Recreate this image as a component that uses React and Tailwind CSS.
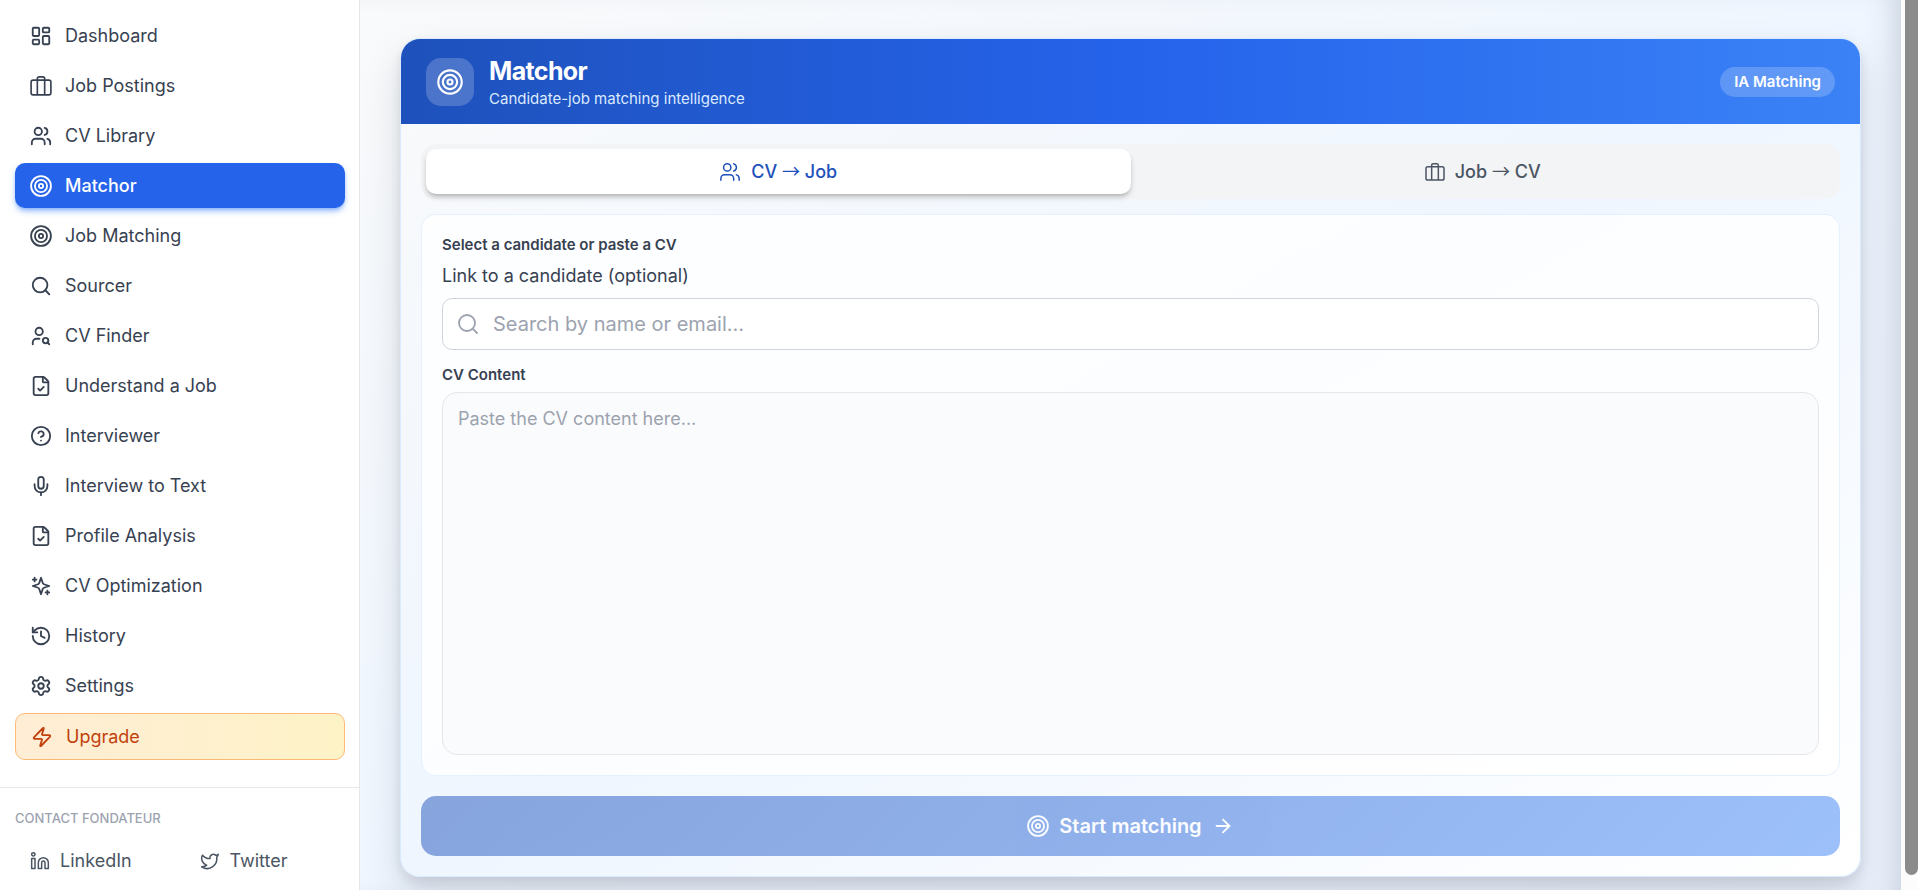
import {
  ArrowRight,
  CircleHelp,
  FileCheck,
  History,
  LayoutDashboard,
  Linkedin,
  Mic,
  Search,
  Settings,
  Twitter,
  UserSearch,
  Users,
  Zap,
} from "lucide-react";

// Bullseye with a small open centre
function Bullseye({ className }) {
  return (
    <svg
      viewBox="0 0 24 24"
      fill="none"
      stroke="currentColor"
      strokeWidth="2"
      className={className}
      aria-hidden="true"
    >
      <circle cx="12" cy="12" r="10.8" />
      <circle cx="12" cy="12" r="6.6" />
      <circle cx="12" cy="12" r="2.3" />
    </svg>
  );
}

function Suitcase({ className, strokeWidth = 1.8 }) {
  return (
    <svg
      viewBox="0 0 24 24"
      fill="none"
      stroke="currentColor"
      strokeWidth={strokeWidth}
      strokeLinejoin="round"
      className={className}
      aria-hidden="true"
    >
      <rect x="1.2" y="5.6" width="21.6" height="16" rx="2.2" />
      <path d="M8 21.6V4a2 2 0 0 1 2-2h4a2 2 0 0 1 2 2v17.6" />
    </svg>
  );
}

function Sparkles({ className }) {
  return (
    <svg
      viewBox="0 0 24 24"
      fill="none"
      stroke="currentColor"
      strokeWidth="2"
      strokeLinecap="round"
      strokeLinejoin="round"
      className={className}
      aria-hidden="true"
    >
      <path d="m12 3-1.912 5.813a2 2 0 0 1-1.275 1.275L3 12l5.813 1.912a2 2 0 0 1 1.275 1.275L12 21l1.912-5.813a2 2 0 0 1 1.275-1.275L21 12l-5.813-1.912a2 2 0 0 1-1.275-1.275L12 3Z" />
      <path d="M5 3v4M19 17v4M3 5h4M17 19h4" />
    </svg>
  );
}

const NAV_ITEMS = [
  { label: "Dashboard", icon: LayoutDashboard },
  { label: "Job Postings", icon: Suitcase },
  { label: "CV Library", icon: Users },
  { label: "Matchor", icon: Bullseye, active: true },
  { label: "Job Matching", icon: Bullseye },
  { label: "Sourcer", icon: Search },
  { label: "CV Finder", icon: UserSearch },
  { label: "Understand a Job", icon: FileCheck },
  { label: "Interviewer", icon: CircleHelp },
  { label: "Interview to Text", icon: Mic },
  { label: "Profile Analysis", icon: FileCheck },
  { label: "CV Optimization", icon: Sparkles },
  { label: "History", icon: History },
  { label: "Settings", icon: Settings },
];

function NavItem({ item }) {
  const Icon = item.icon;
  return (
    <a
      href="#"
      className={
        item.active
          ? "flex items-center gap-[13px] h-[45px] px-[15px] rounded-[10px] bg-[#2563eb] text-white font-medium shadow-md shadow-[#3b82f6]/50"
          : "flex items-center gap-[13px] h-[45px] px-[15px] rounded-[10px] text-[#374151]"
      }
    >
      <Icon className="w-[22px] h-[22px] flex-shrink-0" />
      {item.label}
    </a>
  );
}

function Sidebar() {
  return (
    <aside className="w-[360px] flex-shrink-0 flex flex-col bg-white border-r border-[#e5e7eb]">
      <nav className="flex flex-col gap-[5px] pl-[15px] pr-[14px] pt-[13px] pb-[27px] text-[18px]">
        {NAV_ITEMS.map((item) => (
          <NavItem key={item.label} item={item} />
        ))}
        <a
          href="#"
          className="flex items-center gap-[13px] h-[47px] px-[15px] rounded-[10px] border border-[#fdba74] bg-gradient-to-r from-[#ffedd5] to-[#fef3c7] text-[#c2410c]"
        >
          <Zap className="w-[22px] h-[22px] flex-shrink-0" />
          Upgrade
        </a>
      </nav>

      {/* Founder links */}
      <div className="border-t border-[#e5e7eb] px-[15px] pt-5">
        <p className="text-[13px] leading-5 uppercase font-medium text-[#9ca3af]">
          Contact Fondateur
        </p>
        <div className="grid grid-cols-2 gap-[10px] mt-[10px] text-[18px] text-[#4b5563]">
          <a href="#" className="flex items-center gap-[10px] h-[45px] px-[15px]">
            <Linkedin className="w-5 h-5" strokeWidth={1.8} />
            LinkedIn
          </a>
          <a href="#" className="flex items-center gap-[10px] h-[45px] px-[15px]">
            <Twitter className="w-5 h-5" strokeWidth={1.8} />
            Twitter
          </a>
        </div>
      </div>
    </aside>
  );
}

function Direction({ from, to }) {
  return (
    <span>
      {from} <span className="font-['Noto_Sans_CJK_SC',sans-serif] font-normal leading-none">→</span> {to}
    </span>
  );
}

function MatchCard() {
  return (
    <div className="rounded-[20px] border border-[#dbeafe] bg-gradient-to-br from-[#f9fafb] via-[#eff6ff] to-white shadow-[0_20px_40px_rgba(15,23,42,0.12),0_6px_12px_rgba(15,23,42,0.1)] overflow-hidden">
      {/* Header */}
      <header className="flex items-center justify-between h-[85px] px-[25px] bg-gradient-to-r from-[#1e51bb] via-[#2563eb] to-[#3b82f6] text-white">
        <div className="flex items-center gap-[15px]">
          <div className="flex items-center justify-center w-12 h-12 rounded-[15px] bg-white/20">
            <Bullseye className="w-[26px] h-[26px]" />
          </div>
          <div className="pt-[2px]">
            <h1 className="text-[25px] leading-8 font-bold tracking-tight">
              Matchor
            </h1>
            <p className="text-[15px] leading-6 text-[#dbeafe]">
              Candidate-job matching intelligence
            </p>
          </div>
        </div>
        <span className="px-[14px] py-1 rounded-full bg-white/20 text-[15px] leading-[22px] font-semibold">
          IA Matching
        </span>
      </header>

      <div className="flex flex-col p-5">
        {/* Direction tabs */}
        <div className="grid grid-cols-2 p-[5px] rounded-[15px] bg-[#f3f4f6] text-[18px] font-medium">
          <button
            type="button"
            className="flex items-center justify-center gap-[10px] h-[45px] rounded-[10px] bg-white text-[#1e51bb] shadow-md shadow-black/20"
          >
            <Users className="w-[22px] h-[22px]" strokeWidth={1.6} />
            <Direction from="CV" to="Job" />
          </button>
          <button
            type="button"
            className="flex items-center justify-center gap-[10px] h-[45px] rounded-[10px] text-[#4b5563]"
          >
            <Suitcase className="w-5 h-5" />
            <Direction from="Job" to="CV" />
          </button>
        </div>

        {/* Candidate form */}
        <div className="mt-[15px] p-5 rounded-[15px] border border-[#dbeafe]/70 bg-white/80 text-[#374151]">
          <p className="text-[15px] leading-5 font-semibold">
            Select a candidate or paste a CV
          </p>
          <label htmlFor="candidate" className="block mt-2 text-[18px] leading-[25px]">
            Link to a candidate (optional)
          </label>
          <div className="flex items-center gap-[13px] h-[52px] mt-[10px] px-[13px] rounded-[10px] border border-[#d1d5db] bg-white">
            <Search className="w-6 h-6 text-[#9ca3af]" strokeWidth={1.8} />
            <input
              id="candidate"
              type="text"
              placeholder="Search by name or email..."
              className="flex-1 text-[20px] outline-none placeholder:text-[#9ca3af]"
            />
          </div>
          <label
            htmlFor="cv"
            className="block mt-[15px] text-[15px] leading-5 font-semibold"
          >
            CV Content
          </label>
          <textarea
            id="cv"
            placeholder="Paste the CV content here..."
            className="block w-full h-[363px] mt-[7px] px-[15px] py-3 rounded-[15px] border border-[#e5e7eb] bg-[#f9fafb]/80 text-[18px] leading-7 resize-none outline-none placeholder:text-[#9ca3af]"
          />
        </div>

        <button
          type="button"
          disabled
          className="flex items-center justify-center gap-[10px] h-[60px] mt-5 rounded-[15px] bg-[linear-gradient(135deg,#1e51bb,#3b82f6)] opacity-50 text-white text-[20px] font-semibold"
        >
          <Bullseye className="w-[22px] h-[22px]" />
          Start matching
          <ArrowRight className="w-[22px] h-[22px]" />
        </button>
      </div>
    </div>
  );
}

export default function App() {
  return (
    <div className="flex h-screen overflow-hidden bg-[#fcfcfc] font-['Inter',sans-serif]">
      <Sidebar />
      <main className="flex-1 min-w-0 px-10 pt-[38px] bg-gradient-to-br from-[#f9fafb] via-[#eff6ff] to-[#eef4ff] shadow-[inset_-24px_0_30px_-20px_rgba(71,85,105,0.25)]">
        <MatchCard />
      </main>

      {/* Scrollbar */}
      <div className="w-[17px] flex-shrink-0 pl-1 pb-[15px]">
        <div className="h-full rounded-b-full bg-[#8b8b8b]" />
      </div>
    </div>
  );
}
